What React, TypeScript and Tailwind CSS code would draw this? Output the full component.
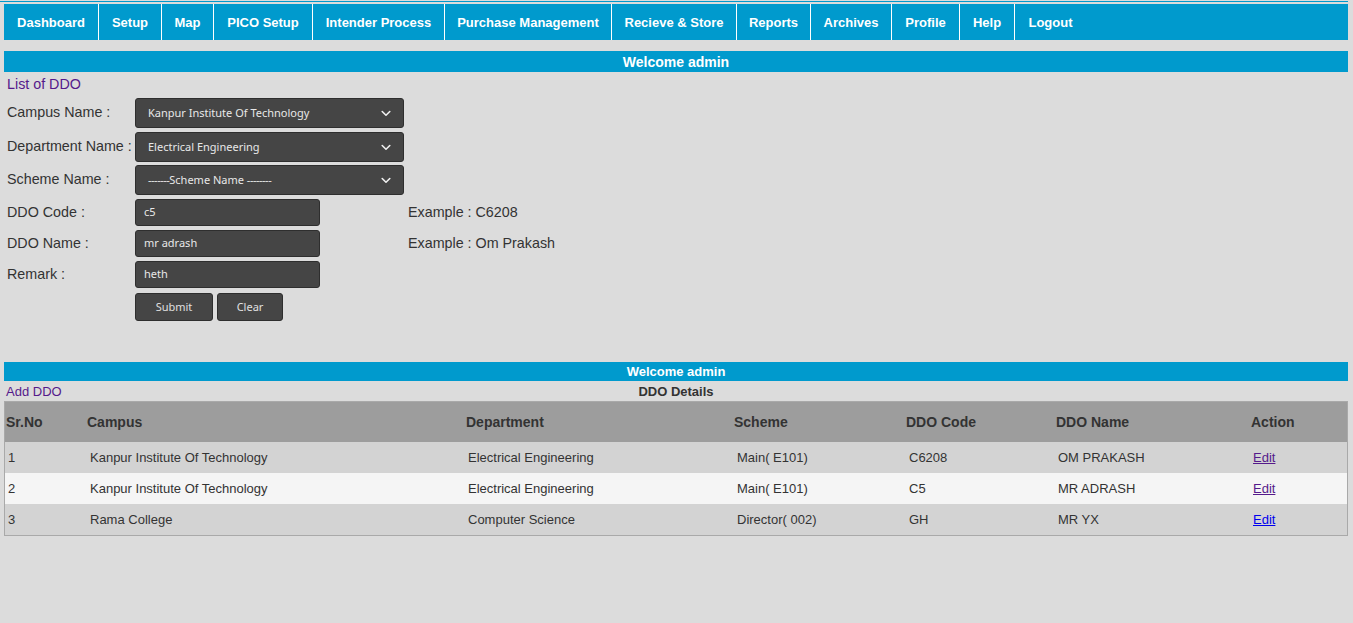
import React from "react";

const BLUE = "bg-[#009acd]";

const navItems = [
  { t: "Dashboard", w: 95 },
  { t: "Setup", w: 63 },
  { t: "Map", w: 52 },
  { t: "PICO Setup", w: 99 },
  { t: "Intender Process", w: 132 },
  { t: "Purchase Management", w: 167 },
  { t: "Recieve & Store", w: 125 },
  { t: "Reports", w: 74 },
  { t: "Archives", w: 81 },
  { t: "Profile", w: 68 },
  { t: "Help", w: 55 },
  { t: "Logout", w: 71 },
];

const Chevron = () => (
  <svg width="10" height="7" viewBox="0 0 10 7" className="shrink-0">
    <path d="M1.2 1.5 L5 5.2 L8.8 1.5" fill="none" stroke="#f0f0f0" strokeWidth="1.6" strokeLinecap="round" strokeLinejoin="round" />
  </svg>
);

const SelectBox = ({ children }: { children: React.ReactNode }) => (
  <div className="w-[269px] h-[30px] rounded-[3px] bg-[#454545] border border-[#2e2e2e] flex items-center justify-between pl-[12px] pr-[12px] text-[11px] text-[#e8e8e8] [font-family:'Noto_Sans','Open_Sans',sans-serif]">
    <span>{children}</span>
    <Chevron />
  </div>
);

const InputBox = ({ text }: { text: string }) => (
  <div className="w-[185px] h-[27px] rounded-[3px] bg-[#454545] border border-[#2e2e2e] flex items-center pl-[8px] text-[11px] text-[#e8e8e8] [font-family:'Noto_Sans','Open_Sans',sans-serif]">
    {text}
  </div>
);

const rows = [
  { n: "1", c: "Kanpur Institute Of Technology", d: "Electrical Engineering", s: "Main( E101)", code: "C6208", name: "OM PRAKASH", bg: "bg-[#d3d3d3]", link: "text-[#551a8b]" },
  { n: "2", c: "Kanpur Institute Of Technology", d: "Electrical Engineering", s: "Main( E101)", code: "C5", name: "MR ADRASH", bg: "bg-[#f5f5f5]", link: "text-[#551a8b]" },
  { n: "3", c: "Rama College", d: "Computer Science", s: "Director( 002)", code: "GH", name: "MR YX", bg: "bg-[#d3d3d3]", link: "text-[#0000ee]" },
];

const cols = [80, 380, 268, 172, 150, 195, 97];

export default function App() {
  return (
    <div className="min-h-[623px] w-full bg-[#dcdcdc] text-[#333] [font-family:'Liberation_Sans',Arial,sans-serif]">
      <div className="pt-[1px]">
        <div className={`h-[1px] w-[1348px] ${BLUE}`} />
      </div>
      <div className={`mt-[2px] ml-[4px] mr-[5px] h-[36px] ${BLUE} flex`}>
        {navItems.map((n) => (
          <div
            key={n.t}
            style={{ width: n.w }}
            className="h-full pt-[1px] border-r border-white flex items-center justify-center text-[13px] font-bold text-white whitespace-nowrap last:border-r-0"
          >
            {n.t}
          </div>
        ))}
      </div>

      <div className={`mt-[11px] ml-[4px] mr-[5px] h-[21px] pt-[1px] ${BLUE} flex items-center justify-center text-[14px] font-bold text-white`}>
        Welcome admin
      </div>

      <div className="mt-[4px] pl-[7px] text-[14.3px] leading-[16px] text-[#551a8b]">List of DDO</div>

      <div className="mt-[6px] pl-[7px] flex flex-col text-[14.3px] text-[#333]">
        <div className="flex items-center">
          <div className="w-[128px]">Campus Name :</div>
          <SelectBox>Kanpur Institute Of Technology</SelectBox>
        </div>
        <div className="flex items-center mt-[4px]">
          <div className="w-[128px] whitespace-nowrap">Department Name :</div>
          <SelectBox>Electrical Engineering</SelectBox>
        </div>
        <div className="flex items-center mt-[3px]">
          <div className="w-[128px]">Scheme Name :</div>
          <SelectBox>
            <span className="tracking-[-0.5px]">-------</span>Scheme Name <span className="tracking-[-0.5px]">--------</span>
          </SelectBox>
        </div>
        <div className="flex items-center mt-[4px]">
          <div className="w-[128px]">DDO Code :</div>
          <InputBox text="c5" />
          <div className="ml-[88px]">Example : C6208</div>
        </div>
        <div className="flex items-center mt-[4px]">
          <div className="w-[128px]">DDO Name :</div>
          <InputBox text="mr adrash" />
          <div className="ml-[88px]">Example : Om Prakash</div>
        </div>
        <div className="flex items-center mt-[4px]">
          <div className="w-[128px]">Remark :</div>
          <InputBox text="heth" />
        </div>
        <div className="flex items-center mt-[5px] pl-[128px] gap-[4px] text-[11px] text-[#e0e0e0] [font-family:'Noto_Sans','Open_Sans',sans-serif]">
          <div className="w-[78px] h-[28px] rounded-[3px] bg-[#454545] border border-[#2e2e2e] flex items-center justify-center">Submit</div>
          <div className="w-[66px] h-[28px] rounded-[3px] bg-[#454545] border border-[#2e2e2e] flex items-center justify-center">Clear</div>
        </div>
      </div>

      <div className={`mt-[41px] ml-[4px] mr-[5px] h-[19px] ${BLUE} flex items-center justify-center text-[13px] font-bold text-white`}>
        Welcome admin
      </div>

      <div className="ml-[4px] mr-[5px] h-[20px] pt-[2px] flex items-center relative">
        <span className="pl-[2px] text-[13px] text-[#551a8b]">Add DDO</span>
        <span className="absolute left-0 right-0 text-center text-[13px] font-bold text-[#333] pointer-events-none">DDO Details</span>
      </div>

      <div className="ml-[4px] mr-[5px] border border-[#a9a9a9]">
        <table className="w-full table-fixed border-collapse">
          <colgroup>
            {cols.map((w, i) => (
              <col key={i} style={{ width: w }} />
            ))}
          </colgroup>
          <thead>
            <tr className="bg-[#9d9d9d] h-[40px] text-left text-[14px] font-bold text-[#333]">
              <th className="pl-[1px] font-bold">Sr.No</th>
              <th className="pl-[2px] font-bold">Campus</th>
              <th className="pl-[1px] font-bold">Department</th>
              <th className="pl-[1px] font-bold">Scheme</th>
              <th className="pl-[1px] font-bold">DDO Code</th>
              <th className="pl-[1px] font-bold">DDO Name</th>
              <th className="pl-[1px] font-bold">Action</th>
            </tr>
          </thead>
          <tbody className="text-[13px] text-[#333]">
            {rows.map((r) => (
              <tr key={r.n} className={`${r.bg} h-[31px]`}>
                <td className="pl-[3px]">{r.n}</td>
                <td className="pl-[5px]">{r.c}</td>
                <td className="pl-[3px]">{r.d}</td>
                <td className="pl-[4px]">{r.s}</td>
                <td className="pl-[4px]">{r.code}</td>
                <td className="pl-[3px]">{r.name}</td>
                <td className="pl-[3px]">
                  <span className={`underline ${r.link}`}>Edit</span>
                </td>
              </tr>
            ))}
          </tbody>
        </table>
      </div>
    </div>
  );
}
